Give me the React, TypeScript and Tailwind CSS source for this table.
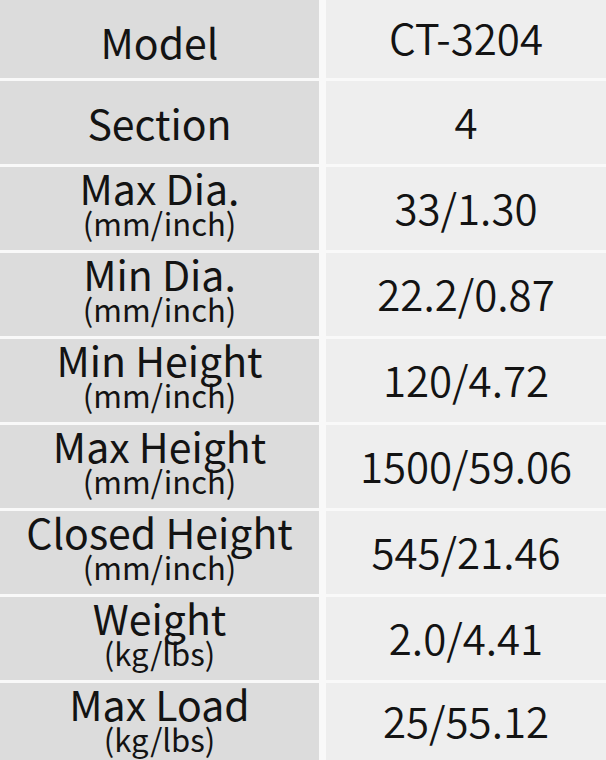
const ROWS: { label: string; unit?: string; value: string }[] = [
  { label: "Model", value: "CT-3204" },
  { label: "Section", value: "4" },
  { label: "Max Dia.", unit: "(mm/inch)", value: "33/1.30" },
  { label: "Min Dia.", unit: "(mm/inch)", value: "22.2/0.87" },
  { label: "Min Height", unit: "(mm/inch)", value: "120/4.72" },
  { label: "Max Height", unit: "(mm/inch)", value: "1500/59.06" },
  { label: "Closed Height", unit: "(mm/inch)", value: "545/21.46" },
  { label: "Weight", unit: "(kg/lbs)", value: "2.0/4.41" },
  { label: "Max Load", unit: "(kg/lbs)", value: "25/55.12" },
];

export default function App() {
  return (
    <div
      className="w-[606px] h-[760px] overflow-hidden bg-[#f9f9f9] text-[#131313]"
      style={{ fontFamily: '"Noto Sans CJK SC", "Noto Sans", sans-serif' }}
    >
      <div className="grid grid-cols-[319px_1fr] gap-x-[7px] gap-y-[3px] grid-rows-[78px_repeat(7,83px)_77px]">
        {ROWS.map((r, i) => (
          <div key={r.label} className="contents">
            {r.unit ? (
              <div className="flex flex-col items-center pt-[2px] bg-[#dcdcdc]">
                <div className="text-[41px] font-normal leading-[36px]">{r.label}</div>
                <div className="mt-[4px] text-[31px] font-normal leading-[28px]">{r.unit}</div>
              </div>
            ) : (
              <div
                className={
                  "flex items-center justify-center bg-[#dcdcdc] text-[41px] font-normal " +
                  (i === 0 ? "pt-[6px]" : "")
                }
              >
                {r.label}
              </div>
            )}
            <div className="flex items-center justify-center pb-[5px] bg-[#eeeeee] text-[42px] font-[350]">
              {r.value}
            </div>
          </div>
        ))}
      </div>
    </div>
  );
}
